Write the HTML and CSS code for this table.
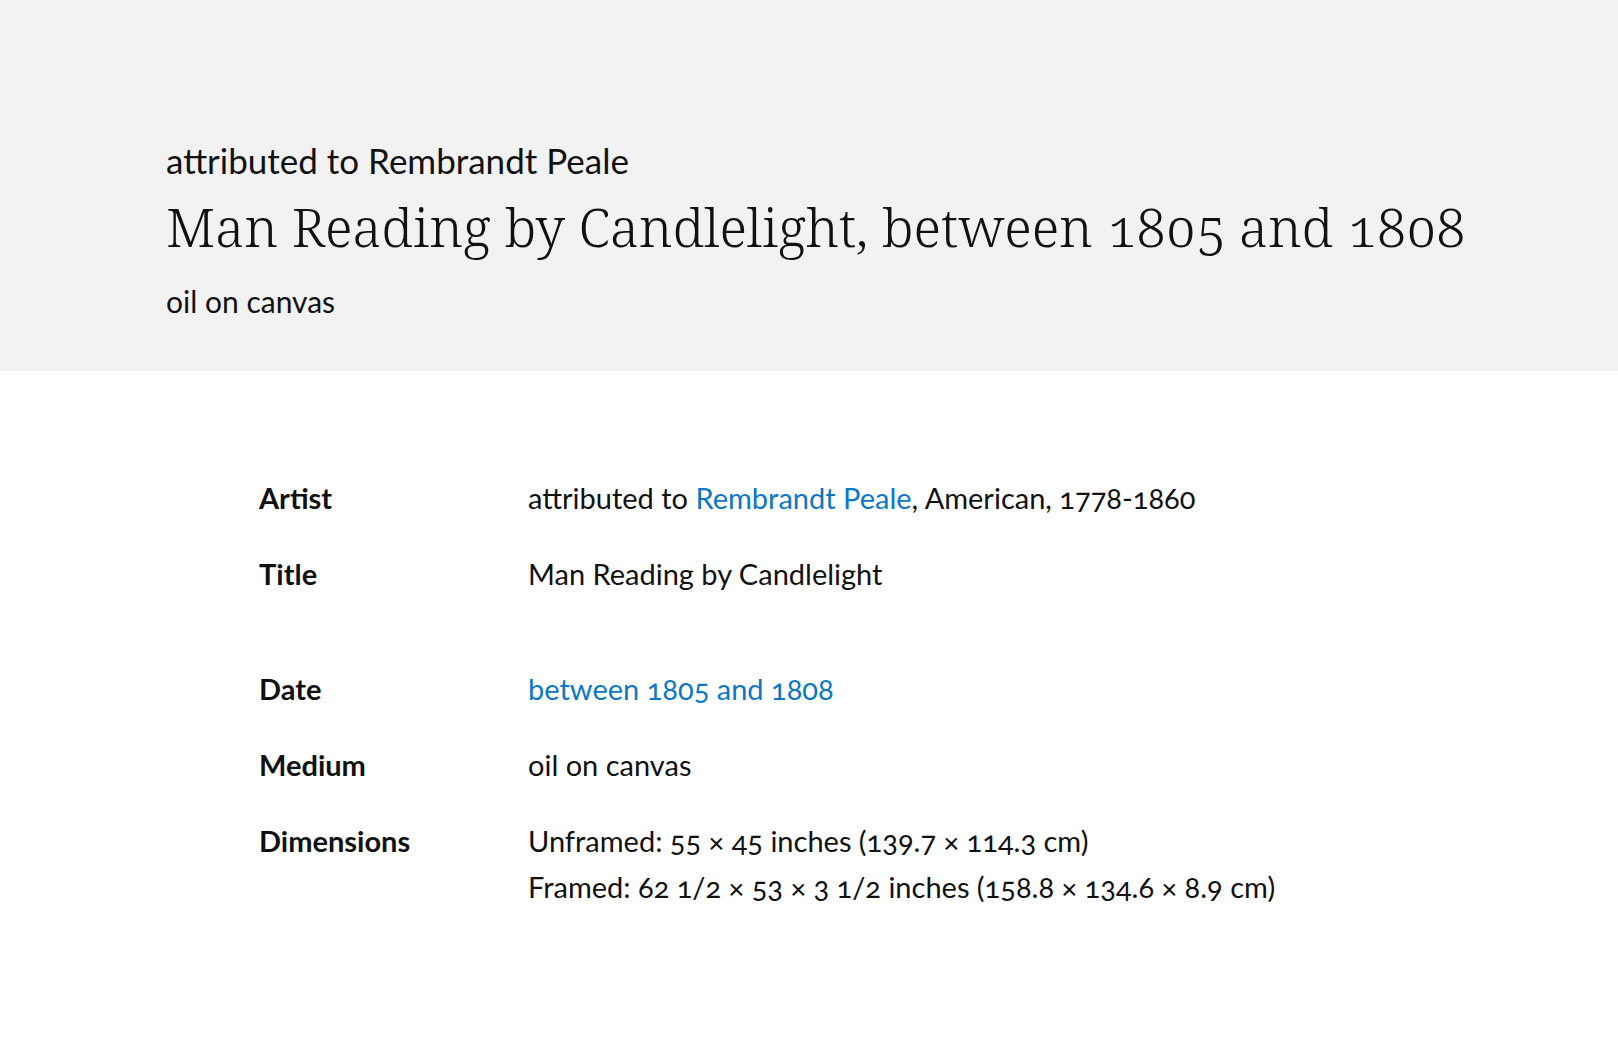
FILE: index.html
```html
<!DOCTYPE html>
<html lang="en">
<head>
<meta charset="utf-8">
<title>Man Reading by Candlelight</title>
<link rel="stylesheet" href="styles.css">
</head>
<body>
<header class="object-header">
  <div class="object-header__inner">
    <p class="object-header__artist">attributed to Rembrandt Peale</p>
    <h1 class="object-header__title">Man Reading by Candlelight, between 1805 and 1808</h1>
    <p class="object-header__medium">oil on canvas</p>
  </div>
</header>
<main class="details">
  <dl class="details__list">
    <div class="details__row">
      <dt class="details__label">Artist</dt>
      <dd class="details__value">attributed to <a class="details__link" href="#">Rembrandt Peale</a>, American, 1778-1860</dd>
    </div>
    <div class="details__row details__row--spaced">
      <dt class="details__label">Title</dt>
      <dd class="details__value">Man Reading by Candlelight</dd>
    </div>
    <div class="details__row">
      <dt class="details__label">Date</dt>
      <dd class="details__value"><a class="details__link" href="#">between 1805 and 1808</a></dd>
    </div>
    <div class="details__row">
      <dt class="details__label">Medium</dt>
      <dd class="details__value">oil on canvas</dd>
    </div>
    <div class="details__row">
      <dt class="details__label">Dimensions</dt>
      <dd class="details__value">
        <div>Unframed: 55 × 45 inches (139.7 × 114.3 cm)</div>
        <div>Framed: 62 1/2 × 53 × 3 1/2 inches (158.8 × 134.6 × 8.9 cm)</div>
      </dd>
    </div>
  </dl>
</main>
</body>
</html>
```
FILE: styles.css
```css
* { box-sizing: border-box; }

html, body {
  margin: 0;
  padding: 0;
  background: #ffffff;
}

body {
  font-family: "Lato", "Open Sans", sans-serif;
  color: #111111;
  font-variant-numeric: oldstyle-nums;
}

.object-header {
  background: #f2f2f2;
  padding: 139px 0 50px 166px;
}

.object-header__inner {
  display: flex;
  flex-direction: column;
}

.object-header__artist {
  margin: 0;
  font-size: 35px;
  line-height: 42px;
  font-weight: 400;
}

.object-header__title {
  margin: 11px 0 0 0;
  font-family: "Noto Serif", "Liberation Serif", serif;
  font-weight: 300;
  font-size: 53.3px;
  line-height: 70px;
  font-variant-numeric: oldstyle-nums;
}

.object-header__medium {
  margin: 19px 0 0 0;
  font-size: 30px;
  line-height: 40px;
}

.details {
  padding: 104px 0 120px 259px;
}

.details__list {
  margin: 0;
  display: flex;
  flex-direction: column;
  gap: 30px;
}

.details__row {
  display: grid;
  grid-template-columns: 269px 1fr;
  font-size: 29px;
  line-height: 46px;
}

.details__row--spaced {
  margin-bottom: 39px;
}

.details__label {
  font-weight: 700;
  margin: 0;
}

.details__value {
  margin: 0;
}

.details__link {
  color: #0b77c5;
  text-decoration: none;
}
```
